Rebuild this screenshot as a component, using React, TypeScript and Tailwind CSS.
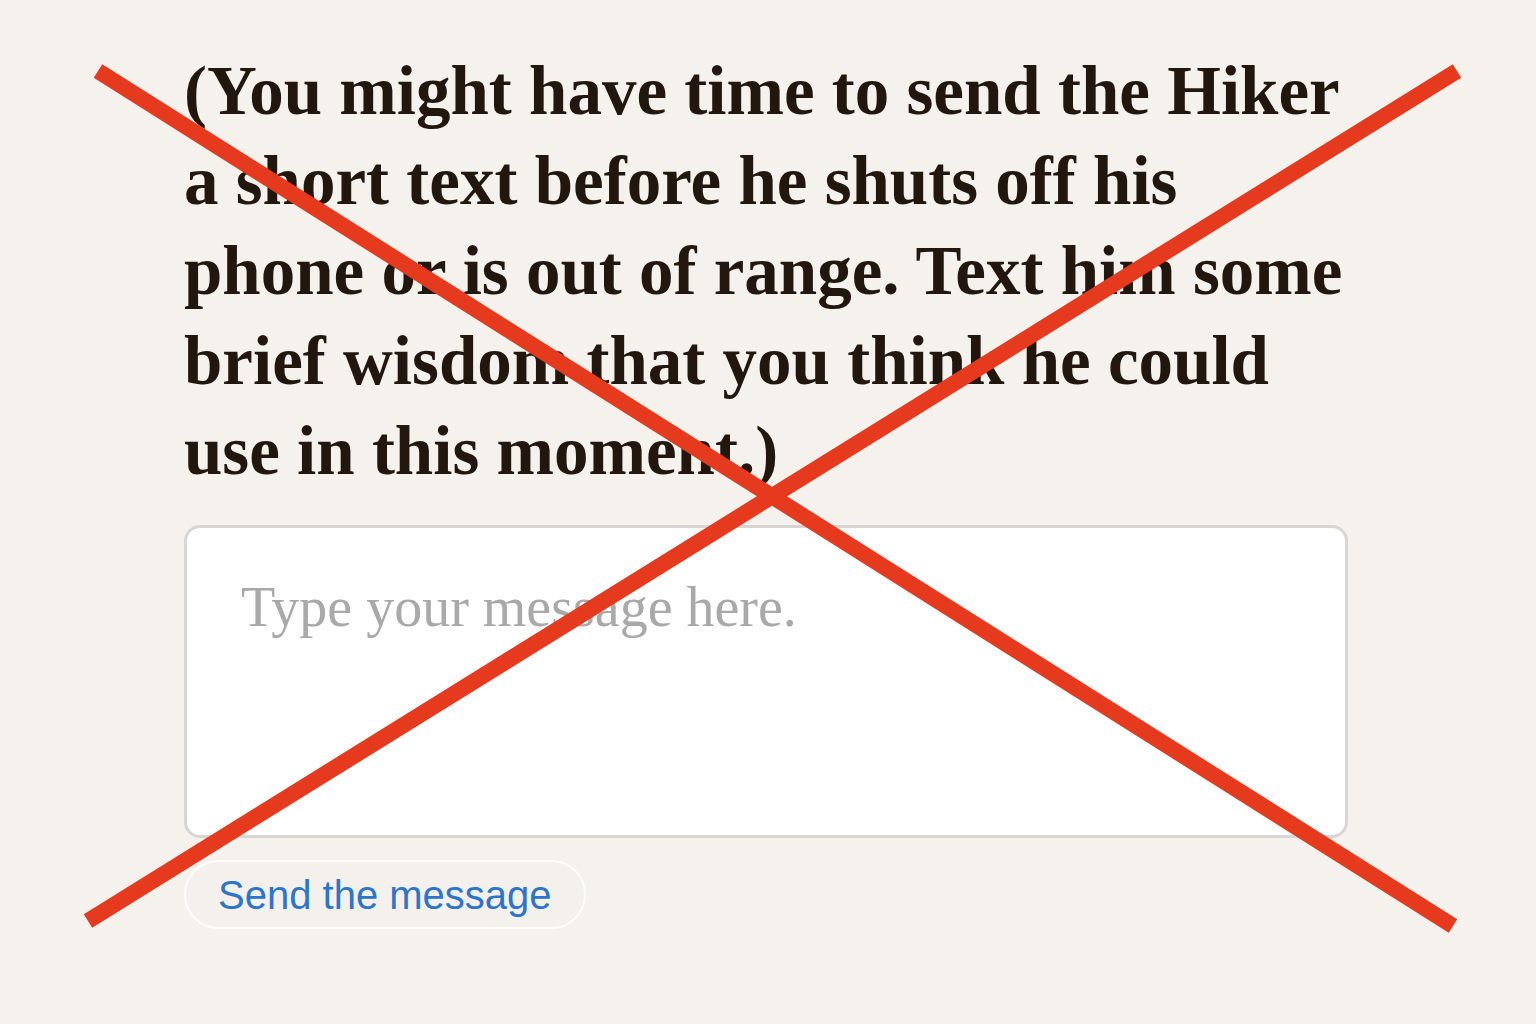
import React from "react";

export default function App() {
  return (
    <div className="relative h-[1024px] w-full overflow-hidden bg-[#f5f2ed]">
      <div className="flex flex-col items-start pl-[184px] pt-[46px]">
        <h1 className="w-[1250px] font-['Liberation_Serif','DejaVu_Serif',serif] text-[69px] font-bold leading-[90px] text-[#21170f]">
          (You might have time to send the Hiker
          <br />
          a short text before he shuts off his
          <br />
          phone or is out of range. Text him some
          <br />
          brief wisdom that you think he could
          <br />
          use in this moment.)
        </h1>
        <textarea
          className="mt-[29px] block h-[313px] w-[1164px] resize-none rounded-[16px] border-[3px] border-[#d7d6d4] bg-white pl-[54px] pt-[46px] font-['Liberation_Serif','DejaVu_Serif',serif] text-[56px] leading-[1.2] text-[#333] outline-none placeholder:text-[#a9a9a9]"
          placeholder="Type your message here."
        />
        <button className="mt-[22px] flex h-[69px] items-center rounded-full border-2 border-[#fdfdfc] bg-[#f4f1ec] px-[32px] font-['Liberation_Sans',Arial,sans-serif] text-[40px] text-[#2d74cd]">
          Send the message
        </button>
      </div>
      <svg
        className="pointer-events-none absolute left-0 top-0"
        width="1536"
        height="1024"
        viewBox="0 0 1536 1024"
      >
        <line x1="98" y1="71" x2="1453" y2="926" stroke="#e63a1f" strokeWidth="16" />
        <line x1="1457" y1="71" x2="88" y2="921" stroke="#e63a1f" strokeWidth="16" />
      </svg>
    </div>
  );
}
